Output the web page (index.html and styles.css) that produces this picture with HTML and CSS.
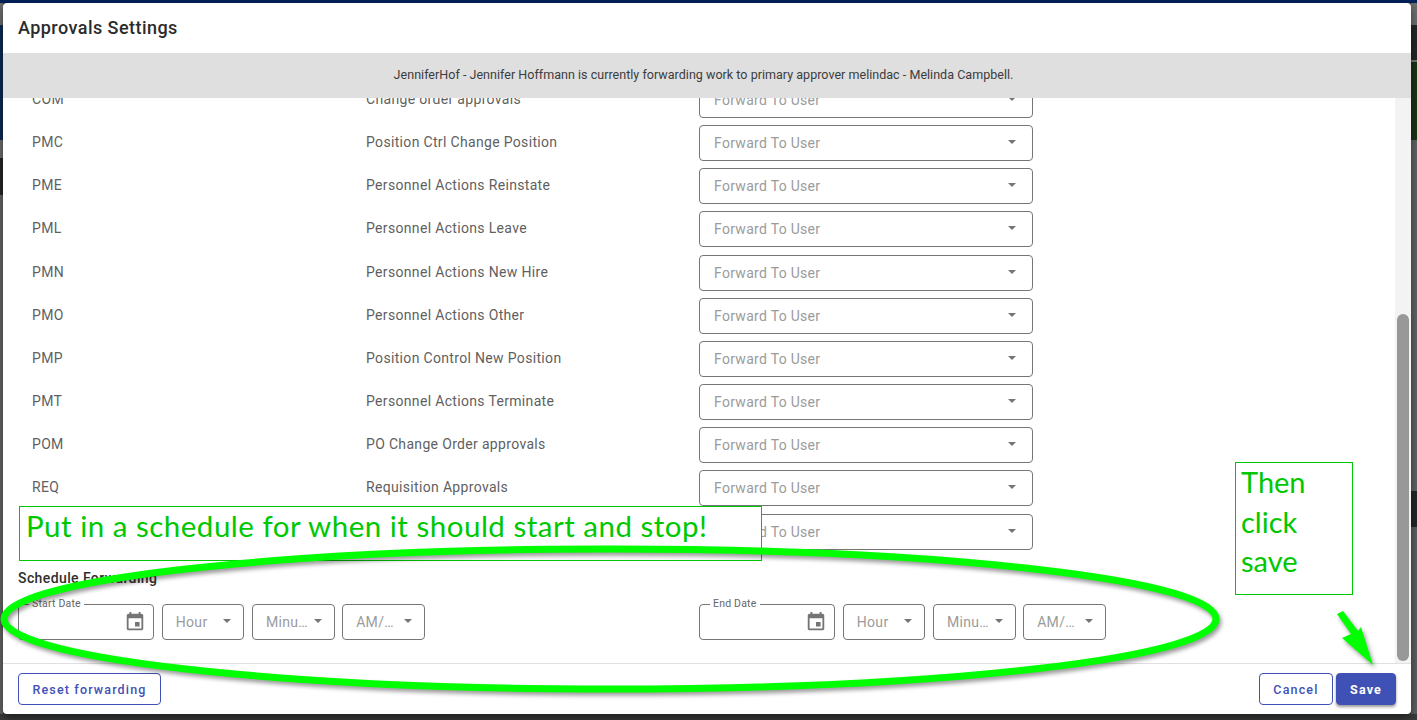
FILE: index.html
```html
<!DOCTYPE html>
<html>
<head lang="en">
    <meta charset="UTF-8">
    <title>Approvals Settings</title>
    <link rel="stylesheet" href="styles.css">
</head>
<body>
<svg width="0" height="0" class="defs">
    <symbol id="event" viewBox="0 0 24 24"><path d="M17 12h-5v5h5v-5zM16 1v2H8V1H6v2H5c-1.11 0-1.99.9-1.99 2L3 19c0 1.1.89 2 2 2h14c1.1 0 2-.9 2-2V5c0-1.1-.9-2-2-2h-1V1h-2zm3 18H5V8h14v11z"/></symbol>
</svg>
<div class="dialog">
    <h1 class="title">Approvals Settings</h1>
    <div class="banner">JenniferHof - Jennifer Hoffmann is currently forwarding work to primary approver melindac - Melinda Campbell.</div>
    <div class="content">
        <div class="scroller">
            <div class="rows">
                <div class="row"><span>COM</span><span>Change order approvals</span><div class="field"><span class="ph">Forward To User</span><i class="caret"></i></div></div>
                <div class="row"><span>PMC</span><span>Position Ctrl Change Position</span><div class="field"><span class="ph">Forward To User</span><i class="caret"></i></div></div>
                <div class="row"><span>PME</span><span>Personnel Actions Reinstate</span><div class="field"><span class="ph">Forward To User</span><i class="caret"></i></div></div>
                <div class="row"><span>PML</span><span>Personnel Actions Leave</span><div class="field"><span class="ph">Forward To User</span><i class="caret"></i></div></div>
                <div class="row"><span>PMN</span><span>Personnel Actions New Hire</span><div class="field"><span class="ph">Forward To User</span><i class="caret"></i></div></div>
                <div class="row"><span>PMO</span><span>Personnel Actions Other</span><div class="field"><span class="ph">Forward To User</span><i class="caret"></i></div></div>
                <div class="row"><span>PMP</span><span>Position Control New Position</span><div class="field"><span class="ph">Forward To User</span><i class="caret"></i></div></div>
                <div class="row"><span>PMT</span><span>Personnel Actions Terminate</span><div class="field"><span class="ph">Forward To User</span><i class="caret"></i></div></div>
                <div class="row"><span>POM</span><span>PO Change Order approvals</span><div class="field"><span class="ph">Forward To User</span><i class="caret"></i></div></div>
                <div class="row"><span>REQ</span><span>Requisition Approvals</span><div class="field"><span class="ph">Forward To User</span><i class="caret"></i></div></div>
                <div class="row"><span></span><span></span><div class="field"><span class="ph">Forward To User</span><i class="caret"></i></div></div>
            </div>
            <h2 class="sched-title">Schedule Forwarding</h2>
            <div class="sched">
                <div class="group">
                    <div class="field date"><label>Start Date</label><svg class="cal"><use href="#event"/></svg></div>
                    <div class="field small"><span class="ph">Hour</span><i class="caret"></i></div>
                    <div class="field small"><span class="ph">Minute</span><i class="caret"></i></div>
                    <div class="field small"><span class="ph">AM/PM</span><i class="caret"></i></div>
                </div>
                <div class="group">
                    <div class="field date"><label>End Date</label><svg class="cal"><use href="#event"/></svg></div>
                    <div class="field small"><span class="ph">Hour</span><i class="caret"></i></div>
                    <div class="field small"><span class="ph">Minute</span><i class="caret"></i></div>
                    <div class="field small"><span class="ph">AM/PM</span><i class="caret"></i></div>
                </div>
            </div>
        </div>
        <div class="track"><div class="thumb"></div></div>
    </div>
    <div class="footer">
        <button class="btn">Reset forwarding</button>
        <div class="spacer"></div>
        <button class="btn">Cancel</button>
        <button class="btn primary">Save</button>
    </div>
</div>

<!-- annotations drawn on top of the screenshot -->
<div class="note note-wide">Put in a schedule for when it should start and stop!</div>
<div class="note note-save"><p>Then<br>click<br>save</p></div>
<svg class="marks" width="1417" height="720" viewBox="0 0 1417 720">
    <ellipse cx="610" cy="619" rx="606" ry="70" fill="none" stroke="#00ff00" stroke-width="7"/>
    <polygon points="1337,614 1343,611 1358,631 1361,627 1373,665 1342,638 1351,634" fill="#00ff00"/>
</svg>
</body>
</html>
```
FILE: styles.css
```css
* {
    margin: 0;
    padding: 0;
    box-sizing: border-box;
}
html, body {
    width: 1417px;
    height: 720px;
    overflow: hidden;
}
body {
    position: relative;
    padding: 3px 6px 6px 3px;
    font-family: Roboto, "Liberation Sans", sans-serif;
    color: #4a4a4a;
    background-color: #3b3b3b;
    background-image:
        linear-gradient(#02205a 0 3px, #6e6e6e 3px 25px, #262626 25px 60px, #777 60px 62px, #1a3318 62px 140px, #626262 140px 491px, #262626 491px 527px, #5e5e5e 527px 714px, transparent 714px),
        linear-gradient(#02205a 0 3px, #6e6e6e 3px 25px, #0e2a55 25px 140px, #6e6e6e 140px 158px, #262626 158px 195px, #666 195px 714px, transparent 714px),
        linear-gradient(#02205a 0 3px, transparent 3px);
    background-size: 6px 100%, 3px 100%, 100% 100%;
    background-position: right top, left top, left top;
    background-repeat: no-repeat;
}
.defs {
    position: absolute;
}

.dialog {
    height: 711px;
    display: flex;
    flex-direction: column;
    background: #fff;
    border-radius: 4px;
    overflow: hidden;
    box-shadow: 0 4px 10px rgba(0, 0, 0, .5);
}
.title {
    height: 50px;
    padding: 14px 15px 0;
    font-size: 18px;
    line-height: 22px;
    font-weight: 500;
    letter-spacing: .45px;
    color: #2b2b2b;
}
.banner {
    height: 45px;
    line-height: 43px;
    padding-right: 7px;
    background: #dfdfdf;
    text-align: center;
    font-size: 12.5px;
    letter-spacing: .03px;
    color: #3c3c3c;
}

.content {
    flex: 1;
    min-height: 0;
    display: flex;
    overflow: hidden;
}
.scroller {
    flex: 1;
    min-width: 0;
    padding-left: 15px;
}
.rows {
    margin-top: -19.7px;
}
.row {
    height: 43.17px;
    display: grid;
    grid-template-columns: 334px 333px 334px;
    align-items: center;
    padding-left: 14px;
    font-size: 14px;
    letter-spacing: .33px;
    color: #5f5f5f;
}
.row:last-child {
    margin-top: .5px;
}
.row > span {
    padding-bottom: 2px;
}
.field {
    position: relative;
    height: 36px;
    display: flex;
    align-items: center;
    padding: 0 16px 0 14px;
    border: 1px solid #767676;
    border-radius: 4px;
    background: #fff;
}
.ph {
    flex: 1;
    min-width: 0;
    overflow: hidden;
    white-space: nowrap;
    text-overflow: ellipsis;
    font-size: 14px;
    letter-spacing: .3px;
    color: #9b9b9b;
}
.caret {
    flex: none;
    width: 0;
    height: 0;
    margin-left: 2px;
    margin-bottom: 2px;
    border-left: 4.5px solid transparent;
    border-right: 4.5px solid transparent;
    border-top: 4.5px solid #757575;
}

.sched-title {
    margin-top: 16.9px;
    font-size: 14px;
    line-height: 17px;
    font-weight: 500;
    letter-spacing: .4px;
    color: #2f2f2f;
}
.sched {
    display: flex;
    margin-top: 17px;
}
.group {
    width: 681px;
    display: flex;
    gap: 7.5px;
}
.date {
    width: 136.3px;
    justify-content: flex-end;
    padding: 0 7px 0 0;
}
.small {
    width: 82.7px;
    padding: 0 12px 0 13px;
}
.small .caret {
    margin-left: 5px;
}
.date label {
    position: absolute;
    top: -7px;
    left: 10px;
    padding: 0 3px;
    background: #fff;
    font-size: 10.5px;
    line-height: 12px;
    letter-spacing: .2px;
    color: #666;
}
.cal {
    width: 22px;
    height: 22px;
    fill: #757575;
}

.track {
    flex: none;
    width: 16px;
    display: flex;
    flex-direction: column;
    justify-content: flex-end;
    padding: 0 2px 2px;
    background: #f3f3f3;
}
.thumb {
    height: 347px;
    border-radius: 6px;
    background: #989898;
}

.footer {
    height: 51px;
    display: flex;
    align-items: flex-start;
    gap: 3px;
    padding: 9px 15px 0;
    border-top: 1px solid #e0e0e0;
}
.spacer {
    flex: 1;
}
.btn {
    height: 32px;
    min-width: 60px;
    padding: 0 13.5px;
    border: 1px solid #3f51b5;
    border-radius: 4px;
    background: #fff;
    font-family: Roboto, "Liberation Sans", sans-serif;
    font-size: 12.5px;
    font-weight: 500;
    letter-spacing: 1.15px;
    color: #3f51b5;
}
.primary {
    padding: 0 13px;
    background: #3f51b5;
    color: #fff;
    font-weight: 700;
    box-shadow: 0 2px 3px rgba(0, 0, 0, .4);
}

.note {
    position: absolute;
    background: #fff;
    border: 1px solid #00c800;
    font-family: Lato, "Noto Sans", sans-serif;
    font-size: 29px;
    color: #00c800;
}
.note-wide {
    left: 19px;
    top: 506px;
    width: 743px;
    height: 55px;
    padding: 0 6px;
    font-size: 29.5px;
    letter-spacing: .5px;
    line-height: 38px;
    white-space: nowrap;
}
.note-save {
    left: 1235px;
    top: 462px;
    width: 118px;
    height: 133px;
    padding: 0 5px;
    line-height: 39.5px;
}
.note-save p {
    margin-top: -1px;
}
.marks {
    position: absolute;
    left: 0;
    top: 0;
    filter: drop-shadow(2px 3px 2px rgba(0, 0, 0, .4));
}
```
